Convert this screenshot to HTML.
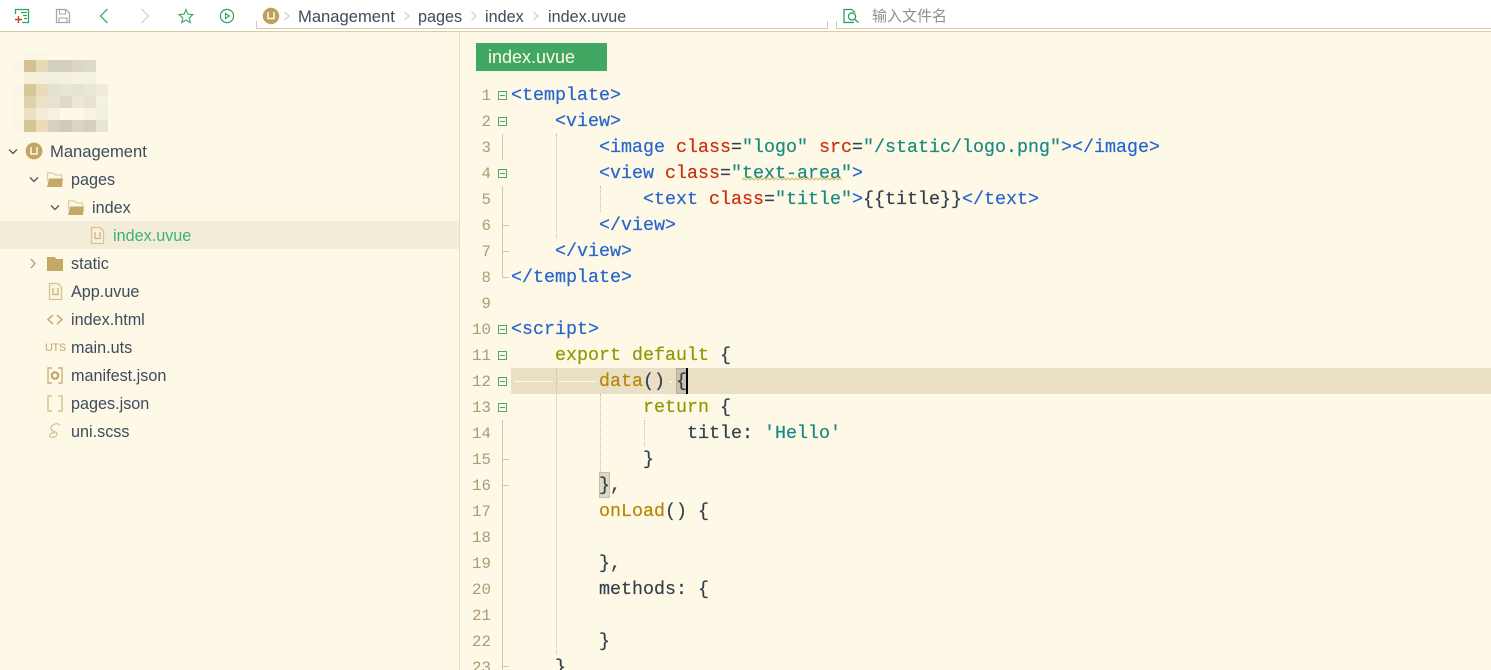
<!DOCTYPE html>
<html><head><meta charset="utf-8">
<style>
html{margin:0;padding:0;width:1491px;height:670px;overflow:hidden}
body{margin:0;padding:0;width:1491px;height:670px;overflow:hidden;position:relative;background:#fef8e7;font-family:"Liberation Sans","Noto Sans CJK SC",sans-serif}
.a{position:absolute}
#top{left:0;top:0;width:1491px;height:31px;background:#fff}
.hl{background:#d9cba3}
.t{position:absolute;font-size:16.2px;line-height:20px;margin-top:1px;color:#3e4b5c;white-space:pre}
.c{position:absolute;left:511px;height:26px;line-height:26px;margin-top:1px;font-family:"Liberation Mono",monospace;font-size:18.33px;color:#33404f;white-space:pre;-webkit-text-stroke:.2px}
.n{position:absolute;left:460px;width:31px;text-align:right;height:26px;line-height:26px;margin-top:1px;font-family:"Liberation Mono",monospace;font-size:15.8px;color:#b09a72}
.b{color:#2566cc}.r{color:#c9300c}.s{color:#178a82}.k{color:#8c9a00}.o{color:#b98500}
.f{position:absolute;left:498px;width:7px;height:7px;border:1px solid #4aa96c}
.f:after{content:"";position:absolute;left:1px;top:3px;width:5px;height:1px;background:#4aa96c}
.v{position:absolute;left:502px;width:1px;background:#cdc8b2}
.h{position:absolute;left:502px;width:7px;height:1px;background:#cdc8b2}
.d{position:absolute;width:0;border-left:1px dotted #c6c1ad}
.p{position:absolute;width:12px;height:12px}
svg{position:absolute;overflow:visible}
</style></head><body>
<div class="a" id="top"></div>
<div class="a hl" style="left:0;top:31px;width:1491px;height:1px"></div>
<div class="a hl" style="left:256px;top:28px;width:572px;height:1px"></div>
<div class="a hl" style="left:256px;top:21px;width:1px;height:8px"></div>
<div class="a hl" style="left:827px;top:21px;width:1px;height:8px"></div>
<div class="a hl" style="left:836px;top:28px;width:655px;height:1px"></div>
<div class="a hl" style="left:836px;top:21px;width:1px;height:8px"></div>
<div class="a" style="left:459px;top:32px;width:1px;height:638px;background:#e6dfc8"></div>

<!-- toolbar icons -->
<svg style="left:0;top:0" width="300" height="31" fill="none">
<path d="M19 9.5H28.5V22.5H22" stroke="#2fa55f" stroke-width="1.3"/>
<path d="M15.5 14V9.5H19" stroke="#2fa55f" stroke-width="1.3"/>
<path d="M21 12.5H27M23 15.5H27M24 18.5H27" stroke="#2fa55f" stroke-width="1.3"/>
<path d="M15 19.5H22M18.5 16V23" stroke="#d0402a" stroke-width="1.4"/>
<path d="M56.5 9.5H66L69.5 13V22.5H56.5Z" stroke="#a8a8a8" stroke-width="1.3"/>
<path d="M59.5 9.5V14H65.5V9.5M59 22.5V18H67V22.5" stroke="#a8a8a8" stroke-width="1.1"/>
<path d="M107.5 9L100.5 16L107.5 23" stroke="#3fae6c" stroke-width="1.4"/>
<path d="M141.5 9L148.5 16L141.5 23" stroke="#d4d4d4" stroke-width="1.4"/>
<path d="M186 9.5L188 14.2L192.8 14.6L189.2 17.8L190.3 22.6L186 20L181.7 22.6L182.8 17.8L179.2 14.6L184 14.2Z" stroke="#3fae6c" stroke-width="1.2"/>
<circle cx="227" cy="16" r="6.6" stroke="#2fa55f" stroke-width="1.2"/>
<path d="M225.5 13.5L229.5 16L225.5 18.5Z" stroke="#2fa55f" stroke-width="1.1"/>
<circle cx="271" cy="16" r="8.2" fill="#bf9f5c" stroke="none"/>
<path d="M268 12V18.5H274V12" stroke="#fef8e7" stroke-width="1.5"/>
<path d="M284.5 12L289 16L284.5 20" stroke="#c4c4c4" stroke-width="1.1"/>
</svg>
<svg style="left:0;top:0" width="840" height="31" fill="none">
<path d="M404.5 12L409 16L404.5 20M471.5 12L476 16L471.5 20M533.5 12L538 16L533.5 20" stroke="#c8c8c8" stroke-width="1.1"/>
</svg>
<svg style="left:0;top:0" width="870" height="31" fill="none">
<path d="M852 9.5H844V22.5H854" stroke="#1fa058" stroke-width="1.3"/>
<path d="M852 9.5L855 12.5" stroke="#1fa058" stroke-width="1.2"/>
<circle cx="852" cy="16.5" r="3.6" stroke="#1fa058" stroke-width="1.2"/>
<path d="M855 19.5L858.5 22.5" stroke="#1fa058" stroke-width="1.3"/>
</svg>

<div class="t" style="left:298px;top:6px;font-size:16.6px">Management</div>
<div class="t" style="left:418px;top:6px">pages</div>
<div class="t" style="left:485px;top:6px">index</div>
<div class="t" style="left:548px;top:6px">index.uvue</div>
<div class="t" style="left:872px;top:6px;font-size:15px;color:#8f8f8f">输入文件名</div>

<!-- blurred logo -->
<div class="p" style="left:24px;top:53px;height:7px;background:#fbf5e3"></div><div class="p" style="left:36px;top:53px;height:7px;background:#fcf6e5"></div>
<div class="p" style="left:12px;top:60px;background:#faf5e6"></div><div class="p" style="left:24px;top:60px;background:#d4c18f"></div><div class="p" style="left:36px;top:60px;background:#e6d9b5"></div><div class="p" style="left:48px;top:60px;background:#d2cfbc"></div><div class="p" style="left:60px;top:60px;background:#d3cebd"></div><div class="p" style="left:72px;top:60px;background:#dbd6c5"></div><div class="p" style="left:84px;top:60px;background:#dddacb"></div>
<div class="p" style="left:24px;top:72px;background:#f5efdb"></div><div class="p" style="left:36px;top:72px;background:#f4eedb"></div><div class="p" style="left:48px;top:72px;background:#f3efe0"></div><div class="p" style="left:60px;top:72px;background:#f4f0e1"></div><div class="p" style="left:72px;top:72px;background:#f6f2e2"></div><div class="p" style="left:84px;top:72px;background:#f5f1e1"></div>
<div class="p" style="left:12px;top:84px;background:#faf5e6"></div><div class="p" style="left:24px;top:84px;background:#d8c799"></div><div class="p" style="left:36px;top:84px;background:#e8dcba"></div><div class="p" style="left:48px;top:84px;background:#e5e1cf"></div><div class="p" style="left:60px;top:84px;background:#e9e5d5"></div><div class="p" style="left:72px;top:84px;background:#e7e3d2"></div><div class="p" style="left:84px;top:84px;background:#ebe7d8"></div><div class="p" style="left:96px;top:84px;background:#efecdd"></div>
<div class="p" style="left:12px;top:96px;background:#fcf6e5"></div><div class="p" style="left:24px;top:96px;background:#e0d1a8"></div><div class="p" style="left:36px;top:96px;background:#ebe1c4"></div><div class="p" style="left:48px;top:96px;background:#e6e1d0"></div><div class="p" style="left:60px;top:96px;background:#dfd9c9"></div><div class="p" style="left:72px;top:96px;background:#ece7d7"></div><div class="p" style="left:84px;top:96px;background:#e6e3d3"></div><div class="p" style="left:96px;top:96px;background:#f4f0e2"></div>
<div class="p" style="left:12px;top:108px;background:#fcf6e5"></div><div class="p" style="left:24px;top:108px;background:#ebe0c3"></div><div class="p" style="left:36px;top:108px;background:#f4ecd6"></div><div class="p" style="left:48px;top:108px;background:#f5f0e0"></div><div class="p" style="left:84px;top:108px;background:#f8f3e3"></div><div class="p" style="left:96px;top:108px;background:#f3efe1"></div>
<div class="p" style="left:12px;top:120px;background:#faf5e6"></div><div class="p" style="left:24px;top:120px;background:#d7c594"></div><div class="p" style="left:36px;top:120px;background:#e8dcba"></div><div class="p" style="left:48px;top:120px;background:#d4d1bf"></div><div class="p" style="left:60px;top:120px;background:#cfcab9"></div><div class="p" style="left:72px;top:120px;background:#d9d5c4"></div><div class="p" style="left:84px;top:120px;background:#d5cfbf"></div><div class="p" style="left:96px;top:120px;background:#e8e4d6"></div>

<!-- sidebar -->
<div class="a" style="left:0;top:221px;width:459px;height:28px;background:#f3ecd8"></div>
<svg style="left:0;top:0" width="120" height="445" fill="none">
<path d="M9 149.5L13 153.5L17 149.5M30 177.5L34 181.5L38 177.5M51 205.5L55 209.5L59 205.5" stroke="#4d5560" stroke-width="1.3"/>
<path d="M31 259L35 263.5L31 268" stroke="#a89c84" stroke-width="1.3"/>
<circle cx="34" cy="151" r="8.4" fill="#c2a562"/>
<path d="M31 147V154H37V147" stroke="#fef8e7" stroke-width="1.5"/>
<path d="M47.5 181V173H53.5L55.5 175H61.5V178" stroke="#dccfa8" stroke-width="1.3"/>
<path d="M47 187L49 178.5H63L62 187Z" fill="#c4a868"/>
<path d="M68.5 209V201H74.5L76.5 203H82.5V206" stroke="#dccfa8" stroke-width="1.3"/>
<path d="M68 215L70 206.5H84L83 215Z" fill="#c4a868"/>
<path d="M47 257H54.5L56.5 259H63V271H47Z" fill="#c4a868"/>
<path d="M91.5 227.5H100L103.5 231V243.5H91.5Z" stroke="#d6c594" stroke-width="1.3" fill="#f8f0da"/>
<path d="M95 232V238.5H100V232" stroke="#c9b27a" stroke-width="1.2"/>
<path d="M49.5 283.5H58L61.5 287V299.5H49.5Z" stroke="#d6c594" stroke-width="1.3" fill="#fbf4e0"/>
<path d="M53 288V294.5H58V288" stroke="#c9b27a" stroke-width="1.2"/>
<path d="M53 315L48 319.5L53 324M57 315L62 319.5L57 324" stroke="#c9b27a" stroke-width="1.6"/>
<path d="M52 368H48V383H52M58 368H62V383H58" stroke="#c9b27a" stroke-width="1.4"/>
<circle cx="55" cy="375.5" r="3.2" fill="#fef8e7" stroke="#bfa468" stroke-width="2.2"/>
<path d="M52 396H48V411H52M58 396H62V411H58" stroke="#d6c594" stroke-width="1.5"/>
<path d="M60 425C57 422 50 425 51 429C52 432 57 431 57 434C57 437 52 438 50 437C48 435 52 432 55 433" stroke="#d3c08f" stroke-width="1.2"/>
</svg>
<div class="t" style="left:50px;top:141px;font-size:16.6px">Management</div>
<div class="t" style="left:71px;top:169px">pages</div>
<div class="t" style="left:92px;top:197px">index</div>
<div class="t" style="left:113px;top:225px;color:#3cb371">index.uvue</div>
<div class="t" style="left:71px;top:253px">static</div>
<div class="t" style="left:71px;top:281px">App.uvue</div>
<div class="t" style="left:71px;top:309px">index.html</div>
<div class="t" style="left:45px;top:337px;font-size:11px;letter-spacing:-.4px;color:#bfa76e">UTS</div>
<div class="t" style="left:71px;top:337px">main.uts</div>
<div class="t" style="left:71px;top:365px">manifest.json</div>
<div class="t" style="left:71px;top:393px">pages.json</div>
<div class="t" style="left:71px;top:421px">uni.scss</div>

<!-- tab -->
<div class="a" style="left:476px;top:43px;width:131px;height:28px;background:#41a863"></div>
<div class="t" style="left:488px;top:47px;margin-top:0;font-size:18px;color:#fef8e7">index.uvue</div>

<!-- highlight -->
<div class="a" style="left:511px;top:368px;width:980px;height:26px;background:#e8dfc5"></div>
<div class="a" style="left:514px;top:381px;width:39px;height:1px;background:#fef8e7"></div>
<div class="a" style="left:558px;top:381px;width:39px;height:1px;background:#fef8e7"></div>
<div class="a" style="left:670px;top:381px;width:2px;height:2px;background:#fef8e7"></div>
<div class="a" style="left:676px;top:368px;width:10px;height:24px;background:#c9c3ac;border:1px solid #b5af9a"></div>
<div class="a" style="left:599px;top:472px;width:9px;height:24px;background:#dfd9c4;border:1px solid #c5bfaa"></div>
<div class="a" style="left:686px;top:368px;width:2px;height:26px;background:#000;z-index:5"></div>

<!-- guides -->
<div class="v" style="top:134px;height:26px"></div>
<div class="v" style="top:186px;height:91px"></div>
<div class="v" style="top:420px;height:250px"></div>
<div class="h" style="top:225px"></div><div class="h" style="top:251px"></div><div class="h" style="top:277px"></div>
<div class="h" style="top:459px"></div><div class="h" style="top:485px"></div><div class="h" style="top:666px"></div>
<div class="d" style="left:556px;top:134px;height:104px"></div>
<div class="d" style="left:600px;top:186px;height:26px"></div>
<div class="d" style="left:556px;top:368px;height:286px"></div>
<div class="d" style="left:600px;top:394px;height:78px"></div>
<div class="d" style="left:644px;top:420px;height:26px"></div>

<!-- fold -->
<div class="f" style="top:91px"></div><div class="f" style="top:117px"></div><div class="f" style="top:169px"></div><div class="f" style="top:325px"></div><div class="f" style="top:351px"></div><div class="f" style="top:377px"></div><div class="f" style="top:403px"></div>

<!-- numbers -->
<div class="n" style="top:82px">1</div><div class="n" style="top:108px">2</div><div class="n" style="top:134px">3</div><div class="n" style="top:160px">4</div><div class="n" style="top:186px">5</div><div class="n" style="top:212px">6</div><div class="n" style="top:238px">7</div><div class="n" style="top:264px">8</div><div class="n" style="top:290px">9</div><div class="n" style="top:316px">10</div><div class="n" style="top:342px">11</div><div class="n" style="top:368px">12</div><div class="n" style="top:394px">13</div><div class="n" style="top:420px">14</div><div class="n" style="top:446px">15</div><div class="n" style="top:472px">16</div><div class="n" style="top:498px">17</div><div class="n" style="top:524px">18</div><div class="n" style="top:550px">19</div><div class="n" style="top:576px">20</div><div class="n" style="top:602px">21</div><div class="n" style="top:628px">22</div><div class="n" style="top:654px">23</div>

<!-- code -->
<div class="c" style="top:82px"><span class="b">&lt;template&gt;</span></div>
<div class="c" style="top:108px">    <span class="b">&lt;view&gt;</span></div>
<div class="c" style="top:134px">        <span class="b">&lt;image</span> <span class="r">class</span>=<span class="s">"logo"</span> <span class="r">src</span>=<span class="s">"/static/logo.png"</span><span class="b">&gt;&lt;/image&gt;</span></div>
<div class="c" style="top:160px">        <span class="b">&lt;view</span> <span class="r">class</span>=<span class="s">"text-area"</span><span class="b">&gt;</span></div>
<div class="c" style="top:186px">            <span class="b">&lt;text</span> <span class="r">class</span>=<span class="s">"title"</span><span class="b">&gt;</span>{{title}}<span class="b">&lt;/text&gt;</span></div>
<div class="c" style="top:212px">        <span class="b">&lt;/view&gt;</span></div>
<div class="c" style="top:238px">    <span class="b">&lt;/view&gt;</span></div>
<div class="c" style="top:264px"><span class="b">&lt;/template&gt;</span></div>
<div class="c" style="top:316px"><span class="b">&lt;script&gt;</span></div>
<div class="c" style="top:342px">    <span class="k">export default</span> {</div>
<div class="c" style="top:368px">        <span class="o">data</span>() {</div>
<div class="c" style="top:394px">            <span class="k">return</span> {</div>
<div class="c" style="top:420px">                title: <span class="s">'Hello'</span></div>
<div class="c" style="top:446px">            }</div>
<div class="c" style="top:472px">        },</div>
<div class="c" style="top:498px">        <span class="o">onLoad</span>() {</div>
<div class="c" style="top:550px">        },</div>
<div class="c" style="top:576px">        methods: {</div>
<div class="c" style="top:628px">        }</div>
<div class="c" style="top:654px">    }</div>

<svg style="left:742px;top:178px" width="100" height="4" fill="none">
<path d="M0 2L2 0L4 2L6 0L8 2L10 0L12 2L14 0L16 2L18 0L20 2L22 0L24 2L26 0L28 2L30 0L32 2L34 0L36 2L38 0L40 2L42 0L44 2L46 0L48 2L50 0L52 2L54 0L56 2L58 0L60 2L62 0L64 2L66 0L68 2L70 0L72 2L74 0L76 2L78 0L80 2L82 0L84 2L86 0L88 2L90 0L92 2L94 0L96 2L98 0L100 2" stroke="#dcb860" stroke-width="1"/>
</svg>
</body></html>
